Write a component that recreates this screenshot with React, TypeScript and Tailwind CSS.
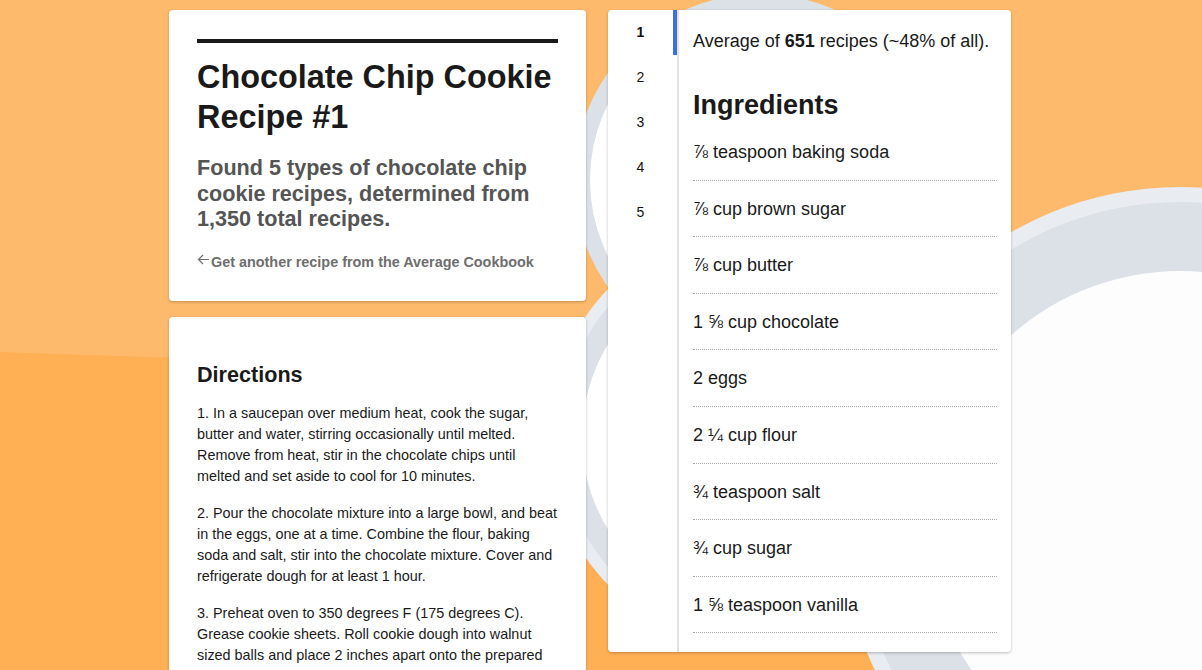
import React from 'react';

const ingredients = [
  '⅞ teaspoon baking soda',
  '⅞ cup brown sugar',
  '⅞ cup butter',
  '1 ⅝ cup chocolate',
  '2 eggs',
  '2 ¼ cup flour',
  '¾ teaspoon salt',
  '¾ cup sugar',
  '1 ⅝ teaspoon vanilla',
];

const directions = [
  '1. In a saucepan over medium heat, cook the sugar, butter and water, stirring occasionally until melted. Remove from heat, stir in the chocolate chips until melted and set aside to cool for 10 minutes.',
  '2. Pour the chocolate mixture into a large bowl, and beat in the eggs, one at a time. Combine the flour, baking soda and salt, stir into the chocolate mixture. Cover and refrigerate dough for at least 1 hour.',
  '3. Preheat oven to 350 degrees F (175 degrees C). Grease cookie sheets. Roll cookie dough into walnut sized balls and place 2 inches apart onto the prepared cookie sheets.',
  '4. Bake for 8 to 10 minutes in the preheated oven. Cookies will look underdone. Let cool on baking sheets for 5 minutes before removing to wire racks to cool completely.',
];

const Backdrop: React.FC = () => (
  <svg className="absolute inset-0 w-full h-full" viewBox="0 0 1202 670" preserveAspectRatio="none">
    <rect width="1202" height="670" fill="#feba6c" />
    <polygon points="0,352 600,372 1202,390 1202,670 0,670" fill="#ffb055" />
    {/* plate behind the ingredients card */}
    <circle cx="760" cy="180" r="186" fill="#dbe1e7" />
    <circle cx="760" cy="180" r="170" fill="#ffffff" />
    {/* lower plate */}
    <circle cx="760" cy="437" r="212" fill="#e9edf1" />
    <circle cx="760" cy="437" r="200" fill="#dbe1e7" />
    <circle cx="760" cy="437" r="178" fill="#ffffff" />
    {/* big plate on the right */}
    <circle cx="1180" cy="525" r="338" fill="#e9edf1" />
    <circle cx="1180" cy="525" r="323" fill="#dbe1e7" />
    <circle cx="1180" cy="525" r="254" fill="#fdfdfd" />
  </svg>
);

export default function App() {
  const [active, setActive] = React.useState(1);

  return (
    <div className="relative h-screen overflow-hidden font-['Liberation_Sans',Arial,sans-serif] text-[#1a1a1a]">
      <Backdrop />
      <div className="relative w-[864px] mx-auto pt-[10px] flex gap-[22px] items-start">
        {/* left column */}
        <div className="w-[417px] flex flex-col gap-4 shrink-0">
          <div className="bg-white rounded-[4px] shadow-[0_1px_3px_rgba(0,0,0,0.25)] px-[28px] pt-[29px] pb-[29px]">
            <div className="h-1 bg-[#1a1a1a]" />
            <h1 className="mt-[14px] text-[32.4px] leading-[40px] font-bold">Chocolate Chip Cookie Recipe #1</h1>
            <p className="mt-[18px] text-[21.6px] leading-[25.5px] font-bold text-[#555555]">
              Found 5 types of chocolate chip cookie recipes, determined from 1,350 total recipes.
            </p>
            <a href="#" className="mt-[20px] flex items-start text-[14.4px] leading-[20px] font-bold text-[#6e6e6e]">
              <svg width="13" height="13" viewBox="0 0 13 13" className="mt-[1px] mr-[1px]" fill="none" stroke="#6e6e6e" strokeWidth="1.2">
                <path d="M12 6.5H1.5M6 2L1.5 6.5L6 11" />
              </svg>
              Get another recipe from the Average Cookbook
            </a>
          </div>

          <div className="bg-white rounded-[4px] shadow-[0_1px_3px_rgba(0,0,0,0.25)] pl-[28px] pr-[25px] pt-[45px] pb-[28px]">
            <h2 className="text-[21.6px] leading-[25px] font-bold">Directions</h2>
            <div className="mt-4 flex flex-col gap-4">
              {directions.map((d) => (
                <p key={d} className="text-[14.4px] leading-[21px]">{d}</p>
              ))}
            </div>
          </div>
        </div>

        {/* right column */}
        <div className="w-[403px] shrink-0 bg-white rounded-[4px] shadow-[0_1px_3px_rgba(0,0,0,0.25)] flex">
          <div className="w-[71px] border-r-2 border-[#e3e3e3] flex flex-col">
            {[1, 2, 3, 4, 5].map((n) => (
              <button
                key={n}
                onClick={() => setActive(n)}
                className={
                  n === active
                    ? 'h-[45px] w-[69px] border-r-4 border-[#3d6fe3] text-[14px] font-bold text-[#111111]'
                    : 'h-[45px] w-[69px] border-r-4 border-transparent text-[14px] text-[#111111]'
                }
              >
                {n}
              </button>
            ))}
          </div>
          <div className="flex-1 pl-[14px] pr-[14px] pt-[18px] pb-[19px]">
            <p className="text-[18px] leading-[27px]">
              Average of <b>651</b> recipes (~48% of all).
            </p>
            <h2 className="mt-[34px] text-[27px] leading-[32px] font-bold">Ingredients</h2>
            <ul className="mt-[3px]">
              {ingredients.map((item) => (
                <li key={item} className="pt-[14px] pb-[13.6px] text-[18px] leading-[28px] border-b border-dotted border-[#a8a8a8]">
                  {item}
                </li>
              ))}
            </ul>
          </div>
        </div>
      </div>
    </div>
  );
}
